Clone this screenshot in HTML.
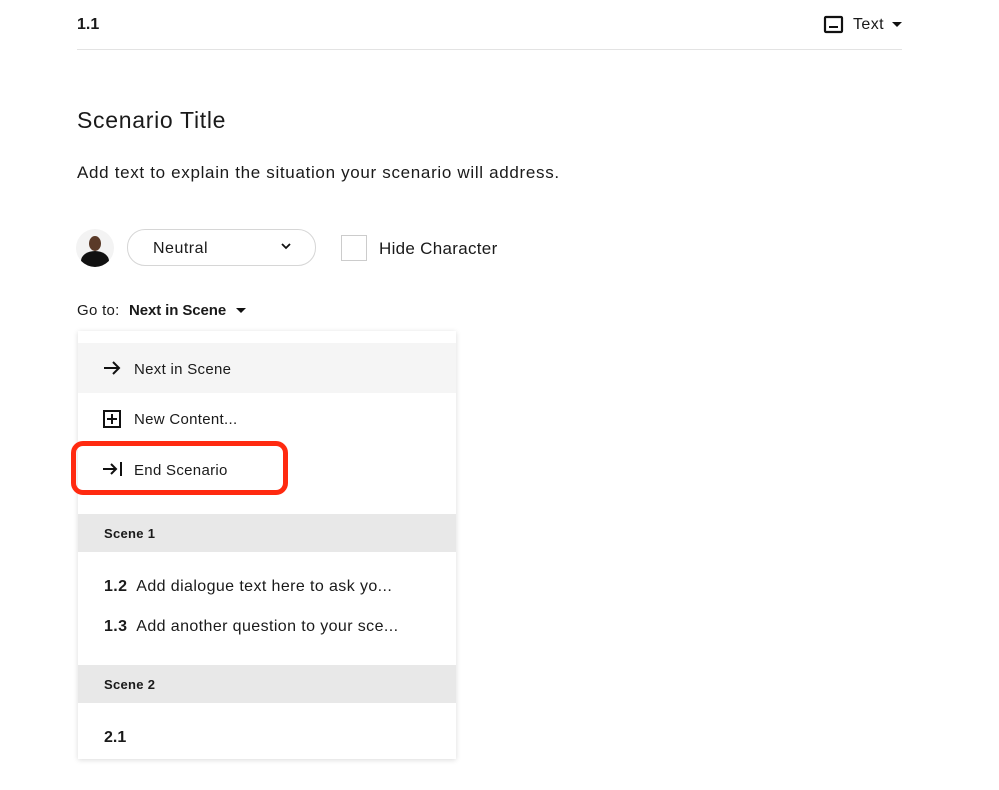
<!DOCTYPE html>
<html><head><style>
body{margin:0;width:999px;height:790px;background:#fff;font-family:"Liberation Sans",sans-serif;color:#1a1a1a;position:relative;overflow:hidden}
.a{position:absolute;white-space:nowrap}
</style></head><body>
<div class="a" style="left:77px;top:16px;font-size:16px;font-weight:bold">1.1</div>
<svg class="a" style="left:823px;top:15px" width="22" height="20"><rect x="2" y="2" width="17" height="15" fill="none" stroke="#111" stroke-width="2.2" rx="1"/><rect x="6" y="11" width="9" height="2" fill="#111"/></svg>
<div class="a" style="left:853px;top:16px;font-size:16px;letter-spacing:0.4px">Text</div>
<svg class="a" style="left:891px;top:21px" width="12" height="8"><path d="M1 1h10L6 6z" fill="#111"/></svg>
<div class="a" style="left:77px;top:49px;width:825px;height:1px;background:#e3e3e3"></div>
<div class="a" style="left:77px;top:107px;font-size:23px;letter-spacing:0.7px">Scenario Title</div>
<div class="a" style="left:77px;top:163px;font-size:17px;letter-spacing:0.68px">Add text to explain the situation your scenario will address.</div>
<div class="a" style="left:76px;top:229px;width:38px;height:38px;border-radius:50%;background:#f3f3f3;overflow:hidden"><div style="position:absolute;left:13px;top:7px;width:12px;height:15px;border-radius:50%;background:#5a3a28"></div><div style="position:absolute;left:5px;top:22px;width:28px;height:20px;border-radius:50% 50% 0 0;background:#111"></div></div>
<div class="a" style="left:127px;top:229px;width:187px;height:35px;border:1px solid #d6d6d6;border-radius:18px"></div>
<div class="a" style="left:153px;top:240px;font-size:16px;letter-spacing:0.5px">Neutral</div>
<svg class="a" style="left:281px;top:243px" width="10" height="7"><path d="M1 1l4 4 4-4" fill="none" stroke="#111" stroke-width="1.8"/></svg>
<div class="a" style="left:341px;top:235px;width:24px;height:24px;border:1px solid #ccc"></div>
<div class="a" style="left:379px;top:239px;font-size:17px;letter-spacing:0.3px">Hide Character</div>
<div class="a" style="left:77px;top:302px;font-size:15px;letter-spacing:0.3px">Go to:</div>
<div class="a" style="left:129px;top:302px;font-size:15px;font-weight:bold;letter-spacing:-0.1px">Next in Scene</div>
<svg class="a" style="left:235px;top:307px" width="12" height="7"><path d="M1 1h10L6 6z" fill="#111"/></svg>
<div class="a" style="left:78px;top:331px;width:378px;height:428px;background:#fff;box-shadow:0 1px 5px rgba(0,0,0,.15)"></div>
<div class="a" style="left:78px;top:343px;width:378px;height:50px;background:#f5f5f5"></div>
<svg class="a" style="left:102px;top:360px" width="20" height="16"><path d="M2 8h15M11 2l6 6-6 6" fill="none" stroke="#111" stroke-width="2"/></svg>
<div class="a" style="left:134px;top:361px;font-size:15px;letter-spacing:0.3px">Next in Scene</div>
<svg class="a" style="left:103px;top:410px" width="18" height="18"><rect x="1" y="1" width="16" height="16" fill="none" stroke="#111" stroke-width="2"/><path d="M9 4v10M4 9h10" stroke="#111" stroke-width="2"/></svg>
<div class="a" style="left:134px;top:411px;font-size:15px;letter-spacing:0.3px">New Content...</div>
<div class="a" style="left:71px;top:441px;width:207px;height:44px;border:5px solid #ff2a10;border-radius:12px"></div>
<svg class="a" style="left:102px;top:460px" width="22" height="18"><path d="M1 9h13M9 4l5 5-5 5M19 2v14" fill="none" stroke="#111" stroke-width="2"/></svg>
<div class="a" style="left:134px;top:462px;font-size:15px;letter-spacing:0.3px">End Scenario</div>
<div class="a" style="left:78px;top:514px;width:378px;height:38px;background:#e8e8e8"></div>
<div class="a" style="left:104px;top:526px;font-size:13px;font-weight:bold;letter-spacing:0.3px">Scene 1</div>
<div class="a" style="left:104px;top:578px;font-size:16px;letter-spacing:0.4px"><b>1.2</b>&nbsp; Add dialogue text here to ask yo...</div>
<div class="a" style="left:104px;top:618px;font-size:16px;letter-spacing:0.4px"><b>1.3</b>&nbsp; Add another question to your sce...</div>
<div class="a" style="left:78px;top:665px;width:378px;height:38px;background:#e8e8e8"></div>
<div class="a" style="left:104px;top:677px;font-size:13px;font-weight:bold;letter-spacing:0.3px">Scene 2</div>
<div class="a" style="left:104px;top:729px;font-size:16px;font-weight:bold">2.1</div>
</body></html>
